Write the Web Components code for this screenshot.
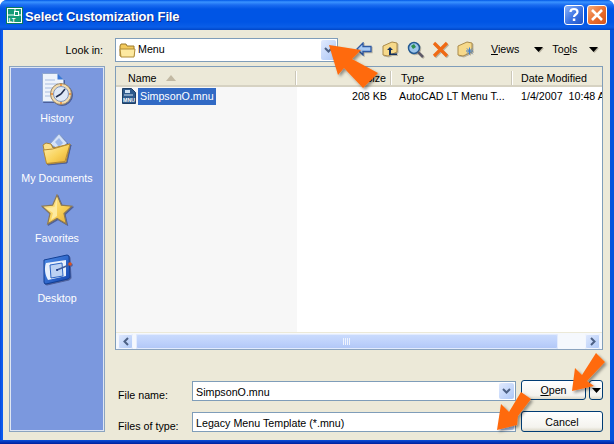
<!DOCTYPE html>
<html>
<head>
<meta charset="utf-8">
<title>Select Customization File</title>
<style>
html,body{margin:0;background:#fff;}
body{font:10.7px "Liberation Sans",Arial,sans-serif;color:#000;width:614px;height:444px;overflow:hidden;}
xp-place svg{filter:drop-shadow(1px 1px 0 rgba(40,50,100,.55));}
</style>
</head>
<body>
<svg width="0" height="0" style="position:absolute">
  <defs>
    <linearGradient id="gold" x1="0" y1="0" x2="1" y2="1"><stop offset="0" stop-color="#fff0b0"/><stop offset=".55" stop-color="#f9d25a"/><stop offset="1" stop-color="#e7a92e"/></linearGradient>
    <linearGradient id="blue" x1="0" y1="0" x2="1" y2="1"><stop offset="0" stop-color="#4f8ee8"/><stop offset="1" stop-color="#1244b0"/></linearGradient>
  </defs>
</svg>
<xp-dialog>
  <xp-titlebar slot="title">Select Customization File</xp-titlebar>
  <xp-places slot="places">
    <xp-place label="History">
      <svg width="32" height="34" viewBox="0 0 32 34"><path d="M1.500 1.500h15l6 6v22h-21z" fill="#eef3fb" stroke="#8ea6cf"/><path d="M16.500 1.500l6 6h-6z" fill="#3b79d8"/><path d="M4 8h10M4 12h13M4 16h8M4 20h7M4 24h7" stroke="#a9bde0"/><circle cx="20" cy="22" r="10.500" fill="#f3dcae" stroke="#96866c"/><circle cx="20" cy="22" r="7.500" fill="#dfe9f7" stroke="#8296bb"/><path d="M20 22l4-5M20 22l-5 3" stroke="#24304f" stroke-width="1.600" fill="none"/><circle cx="20" cy="13" r="1" fill="#e8842c"/><circle cx="20" cy="31" r="1" fill="#e8842c"/><circle cx="11" cy="22" r="1" fill="#e8842c"/><circle cx="29" cy="22" r="1" fill="#e8842c"/></svg>
    </xp-place>
    <xp-place label="My Documents">
      <svg width="30" height="32" viewBox="0 0 30 32"><path d="M8 11L17 1l8 9-6 8z" fill="#d6e3f8" stroke="#8ea6cf"/><path d="M13 9l4-4 4 5-4 4z" fill="#9db9ea"/><path d="M1 12l3-2 5 1 2 4 17-4-4 18-19 2z" fill="#fbe08a" stroke="#a9853a"/><path d="M1.500 17l9-1 17.500-5-5 17.500-18.500 2z" fill="url(#gold)" stroke="#b58a32"/></svg>
    </xp-place>
    <xp-place label="Favorites">
      <svg width="32" height="31" viewBox="0 0 32 31"><path d="M16 1l4.400 10.200 10.600 1-8 7.300 2.400 10.500L16 24.500 6.600 30 9 19.500l-8-7.300 10.600-1z" fill="url(#gold)" stroke="#8d7a55" stroke-width="1.200"/><path d="M16 4l-2.500 9L5 14l7 5-2 7 6-4z" fill="#fdeaa0"/></svg>
    </xp-place>
    <xp-place label="Desktop">
      <svg width="32" height="31" viewBox="0 0 32 31"><path d="M3 6l23-5q2 0 2 2l1 20q0 1-2 2L5 30q-2 0-2-2z" fill="url(#blue)" stroke="#123f94"/><path d="M5 9C3 14 4 21 7 26l18-4V6z" fill="#e8f0fc"/><path d="M9 11l12-2 1 13-12 2z" fill="#bcd2f3" stroke="#2b64c4"/><path d="M16 16l12-5" stroke="#3f5c9c" stroke-width="1.500"/><circle cx="29" cy="10" r="1.800" fill="#e0521c"/><circle cx="16" cy="16" r="1" fill="#14307a"/></svg>
    </xp-place>
  </xp-places>
  <xp-lookin slot="look"></xp-lookin>
  <xp-filelist slot="list"></xp-filelist>
  <xp-footer slot="footer"></xp-footer>
</xp-dialog>

<script>
class XpDialog extends HTMLElement{
  constructor(){
    super();
    this.attachShadow({mode:"open"}).innerHTML = `
<style>
:host{display:flex;flex-direction:column;width:614px;height:444px;position:relative;box-sizing:border-box;
  background:linear-gradient(90deg,#0647d8,#0a5cf0 2px,#0855dd);border-radius:7px 7px 0 0;overflow:hidden;}
.client{flex:1;margin:0 4px 4px 3px;background:#ece9d8;display:grid;grid-template-columns:96px 1fr;
  column-gap:10px;padding:8px 8px 8px 6px;}
.side{grid-row:1/3;margin-top:28px;display:flex;}
.main{display:flex;flex-direction:column;min-width:0;}
.bottomline{height:4px;background:linear-gradient(#0a4fd8,#001f9c);position:absolute;left:0;right:0;bottom:0;}
svg.arrows{position:absolute;left:0;top:0;}
</style>
<slot name="title"></slot>
<div class="client">
  <div class="side"><slot name="places"></slot></div>
  <div class="main">
    <slot name="look"></slot>
    <slot name="list"></slot>
    <slot name="footer"></slot>
  </div>
</div>
<div class="bottomline"></div>
<svg class="arrows" width="614" height="444">
  <defs><filter id="sh" x="-20%" y="-20%" width="150%" height="150%"><feDropShadow dx="2" dy="2" stdDeviation="1.500" flood-color="#000" flood-opacity=".4"/></filter></defs>
  <g fill="#ff6a0c" filter="url(#sh)">
    <polygon points="329,45 361,50 352,59 378,73 363,88 344,68 338,75"/>
    <polygon points="572,391 575,368 582,375 596,353 605,362 587,381 594,386"/>
    <polygon points="497,430 501,404 509,412 521,392 531,399 518,416 517,425"/>
  </g>
</svg>`;
  }
}
customElements.define("xp-dialog",XpDialog);

class XpTitlebar extends HTMLElement{
  constructor(){
    super();
    this.attachShadow({mode:"open"}).innerHTML = `
<style>
:host{display:flex;align-items:center;height:30px;flex:none;box-sizing:border-box;padding:0 7px 0 6px;
  background:linear-gradient(#0058e6 0,#3a93ff 2px,#1a6cf0 5px,#0055e5 9px,#0055e5 22px,#0a5ee8 27px,#0046c8 30px);
  color:#fff;font:bold 13px "Liberation Sans",Arial,sans-serif;letter-spacing:-.12px;text-shadow:1px 1px 0 #0a2a8c;}
.t{margin-left:2px;flex:1;padding-top:2px;}
.b{width:20px;height:20px;box-sizing:border-box;border:1px solid #fff;border-radius:3px;margin-left:3px;display:block;}
.help{background:linear-gradient(135deg,#8ab2f8,#3a72e2 55%,#1f55c8);}
.close{background:linear-gradient(135deg,#f7ab78,#e96c2c 55%,#d6541a);}
text{font:bold 6px "Liberation Sans",sans-serif;fill:#fff;letter-spacing:0;}
</style>
<svg width="17" height="17" viewBox="0 0 17 17"><rect x=".5" y=".5" width="16" height="16" fill="#fff" stroke="#0c7c5c"/><rect x="2" y="2" width="13" height="13" fill="#139b77"/><path d="M2 8h7M12 8h3M9 2v3" stroke="#fff" fill="none"/><rect x="8.500" y="4.500" width="4" height="4" fill="none" stroke="#fff"/><text x="2.500" y="14.500" style="text-shadow:none">LT</text></svg>
<span class="t"><slot></slot></span>
<svg class="b help" viewBox="0 0 18 18"><path d="M5.500 6c0-2 1.500-3 3.500-3s3.500 1 3.500 3c0 2.500-3.500 2.500-3.500 5" fill="none" stroke="#fff" stroke-width="2.200"/><rect x="7.800" y="12.500" width="2.500" height="2.500" fill="#fff"/></svg>
<svg class="b close" viewBox="0 0 18 18"><path d="M4 4l10 10M14 4L4 14" stroke="#fff" stroke-width="2.600"/></svg>`;
  }
}
customElements.define("xp-titlebar",XpTitlebar);

class XpPlaces extends HTMLElement{
  constructor(){
    super();
    this.attachShadow({mode:"open"}).innerHTML = `
<style>
:host{display:flex;flex-direction:column;width:96px;box-sizing:border-box;background:#7b98de;
  border:1px solid #8ba4bf;box-shadow:inset 0 0 0 1px #dfe6f3;padding-top:2px;}
</style>
<slot></slot>`;
  }
}
customElements.define("xp-places",XpPlaces);

class XpPlace extends HTMLElement{
  constructor(){
    super();
    this.attachShadow({mode:"open"}).innerHTML = `
<style>
:host{display:flex;flex-direction:column;align-items:center;justify-content:space-between;height:60px;
  box-sizing:border-box;padding:3px 0 5px;color:#fff;}
div{display:flex;height:34px;align-items:center;}
</style>
<div><slot></slot></div>
<span>${this.getAttribute("label")}</span>`;
  }
}
customElements.define("xp-place",XpPlace);

class XpCombo extends HTMLElement{
  constructor(){
    super();
    this.attachShadow({mode:"open"}).innerHTML = `
<style>
:host{display:flex;align-items:center;box-sizing:border-box;background:#fff;border:1px solid #7f9db9;padding:1px 1px 1px 3px;}
.v{flex:1;display:flex;align-items:center;gap:2px;white-space:nowrap;overflow:hidden;padding-top:var(--text-top,0);}
.d{width:15px;align-self:stretch;border-radius:2px;background:linear-gradient(135deg,#e1eafe,#aec8f7);display:flex;align-items:center;justify-content:center;}
</style>
<span class="v"><slot></slot></span>
<span class="d"><svg width="9" height="6" viewBox="0 0 9 6"><path d="M1 1l3.500 3.500L8 1" fill="none" stroke="#4d6185" stroke-width="2"/></svg></span>`;
  }
}
customElements.define("xp-combo",XpCombo);

class XpLookin extends HTMLElement{
  constructor(){
    super();
    this.attachShadow({mode:"open"}).innerHTML = `
<style>
:host{display:flex;height:28px;box-sizing:border-box;align-items:flex-start;}
.lbl{position:absolute;width:90px;margin-left:-102px;text-align:right;line-height:24px;}
xp-combo{width:223px;height:24px;flex:none;}
.tools{display:flex;align-items:center;height:18px;margin:2px 0 0 18px;}
.tools svg{display:block;flex:none;filter:drop-shadow(1px 1px 0 rgba(90,80,60,.35));}
.m{white-space:nowrap;}
.m u{text-decoration:underline;}
</style>
<span class="lbl">Look in:</span>
<xp-combo>
  <svg width="17" height="15" viewBox="0 0 17 15"><path d="M1 3l1-2h5l1 2h7v10H1z" fill="#f2c95c" stroke="#9c7a2c"/><path d="M1 6h15l-1 8H2z" fill="#fde9a0" stroke="#b08c38"/></svg>
  <span style="margin-top:-2px">Menu</span>
</xp-combo>
<div class="tools">
  <svg width="16" height="14" viewBox="0 0 16 14"><path d="M7 1L1 7l6 6V9.500h8v-5H7z" fill="#a9cbf5" stroke="#2f5aa4" stroke-width="1.300"/></svg>
  <svg width="16" height="16" viewBox="0 0 16 16" style="margin-left:10px"><path d="M1 5l9-4 5 1v9l-9 4-5-1z" fill="#f6d98a" stroke="#a98a4a"/><path d="M8 6L5 9h2v5h8v-1.500H9V9h2z" fill="#12305e"/></svg>
  <svg width="17" height="17" viewBox="0 0 17 17" style="margin-left:9px"><circle cx="7" cy="7" r="5.500" fill="#9cc5ea" stroke="#235a92" stroke-width="1.500"/><path d="M4 5l3-2 2 3-3 2z" fill="#2d8f4e"/><path d="M11 11l5 5" stroke="#5e5a68" stroke-width="2.500"/></svg>
  <svg width="17" height="17" viewBox="0 0 17 17" style="margin-left:8px"><path d="M2 2l13 13M15 2L2 15" stroke="#f06a14" stroke-width="3.200"/></svg>
  <svg width="17" height="16" viewBox="0 0 17 16" style="margin-left:8px"><path d="M1 5l9-4 5 1v9l-9 4-5-1z" fill="#f6d98a" stroke="#a98a4a"/><path d="M9 10h7M12.500 6.500v7M10 7.500l5 5M15 7.500l-5 5" stroke="#3f7fd0"/></svg>
  <span class="m" style="margin-left:17px"><u>V</u>iews</span>
  <svg width="9" height="5" viewBox="0 0 9 5" style="margin-left:15px"><path d="M0 0h9L4.500 5z"/></svg>
  <span class="m" style="margin-left:9px">To<u>o</u>ls</span>
  <svg width="9" height="5" viewBox="0 0 9 5" style="margin-left:12px"><path d="M0 0h9L4.500 5z"/></svg>
</div>`;
  }
}
customElements.define("xp-lookin",XpLookin);

class XpFilelist extends HTMLElement{
  constructor(){
    super();
    this.attachShadow({mode:"open"}).innerHTML = `
<style>
:host{display:flex;flex-direction:column;height:284px;width:488px;box-sizing:border-box;background:#fff;border:1px solid #7f9db9;border-bottom-color:#8ba4bf;}
.cols{display:grid;grid-template-columns:181px 95px 121px 1fr;flex:1;min-height:0;}
.head{height:20px;box-sizing:border-box;padding-top:3px;background:#ece9d8;border-bottom:2px solid #d6d2c2;display:flex;align-items:center;white-space:nowrap;margin-bottom:1px;}
.head i{display:block;width:1px;height:14px;background:#fff;box-shadow:-1px 0 0 #cbc7b8;margin-left:auto;}
.col{display:flex;flex-direction:column;min-width:0;overflow:hidden;}
.col.name{background:#f7f7f7;}
.cell{height:17px;line-height:17px;white-space:nowrap;}
.tri{margin-left:9px;}
.sel{background:#316ac5;color:#fff;padding:0 2px;height:17px;line-height:17px;}
.row{display:flex;gap:2px;padding-left:6px;height:17px;}
.r{text-align:right;padding-right:5px;}
.bar{height:17px;flex:none;display:flex;align-items:center;padding:0 2px;gap:2px;background:#f5f8fd;border-top:1px solid #ece9d8;box-sizing:border-box;}
.btn{width:15px;height:15px;border-radius:2px;background:linear-gradient(135deg,#e1eafe,#aec8f7);display:flex;align-items:center;justify-content:center;flex:none;box-shadow:inset 0 0 0 1px #f2f6fe;}
.thumb{width:422px;height:15px;border-radius:2px;background:linear-gradient(#cbdcfd,#bcd0fb 60%,#b0c6f6);box-shadow:inset 0 0 0 1px #e2ebfe;display:flex;align-items:center;justify-content:center;flex:none;margin-left:1px;}
.sp{flex:1;}
text{font:bold 5px "Liberation Sans",sans-serif;fill:#fff;}
</style>
<div class="cols">
  <div class="col name">
    <div class="head" style="padding-left:12px">Name
      <svg class="tri" width="10" height="6" viewBox="0 0 10 6"><path d="M5 0l5 6H0z" fill="#c2b9a3"/></svg><i></i></div>
    <div class="row">
      <svg width="14" height="16" viewBox="0 0 14 16"><path d="M.5.500h9l4 4v11H.5z" fill="#2e5a8c" stroke="#1d3d63"/><rect x="3" y="2" width="5" height="3" fill="#cfe0f2"/><path d="M2 7h9" stroke="#cfe0f2"/><text x="1" y="14" textLength="12" lengthAdjust="spacingAndGlyphs">MNU</text></svg>
      <span class="sel">SimpsonO.mnu</span>
    </div>
  </div>
  <div class="col">
    <div class="head"><span style="margin-left:auto">Size</span><span style="width:5px"></span><i style="margin-left:0"></i></div>
    <div class="cell r">208 KB</div>
  </div>
  <div class="col">
    <div class="head" style="padding-left:9px">Type<i></i></div>
    <div class="cell" style="padding-left:7px">AutoCAD LT Menu T...</div>
  </div>
  <div class="col">
    <div class="head" style="padding-left:8px">Date Modified</div>
    <div class="cell" style="padding-left:8px">1/4/2007 &nbsp;10:48 A</div>
  </div>
</div>
<div class="bar">
  <span class="btn"><svg width="6" height="9" viewBox="0 0 6 9"><path d="M5 1L1.500 4.500 5 8" fill="none" stroke="#4d6185" stroke-width="2"/></svg></span>
  <span class="thumb"><svg width="8" height="7" viewBox="0 0 8 7"><path d="M.5 0v7M2.500 0v7M4.500 0v7M6.500 0v7" stroke="#eef3fe"/></svg></span>
  <span class="sp"></span>
  <span class="btn"><svg width="6" height="9" viewBox="0 0 6 9"><path d="M1 1l3.500 3.500L1 8" fill="none" stroke="#4d6185" stroke-width="2"/></svg></span>
</div>`;
  }
}
customElements.define("xp-filelist",XpFilelist);

class XpButton extends HTMLElement{
  constructor(){
    super();
    this.attachShadow({mode:"open"}).innerHTML = `
<style>
:host{display:flex;align-items:center;justify-content:center;box-sizing:border-box;border:1px solid #003c74;border-radius:3px;
  background:linear-gradient(#fff,#f4f3ee 80%,#dcd8c8);}
</style>
<slot></slot>`;
  }
}
customElements.define("xp-button",XpButton);

class XpFooter extends HTMLElement{
  constructor(){
    super();
    this.attachShadow({mode:"open"}).innerHTML = `
<style>
:host{display:grid;grid-template-columns:77px 324px 65px 14px;grid-auto-rows:21px;column-gap:0;row-gap:10px;margin-top:30px;align-items:stretch;}
.l{align-self:end;padding-left:3px;line-height:15px;margin-bottom:-2px;}
xp-combo{margin-top:1px;--text-top:2px;}
.open{width:65px;margin-left:5px;height:20px;}
.dd{width:14px;height:20px;margin-left:8px;}
.cancel{grid-column:3/5;width:82px;margin-left:5px;}
u{text-decoration:underline;}
</style>
<span class="l">File name:</span>
<xp-combo>SimpsonO.mnu</xp-combo>
<xp-button class="open"><span><u>O</u>pen</span></xp-button>
<xp-button class="dd"><svg width="9" height="5" viewBox="0 0 9 5"><path d="M0 0h9L4.500 5z"/></svg></xp-button>
<span class="l">Files of type:</span>
<xp-combo>Legacy Menu Template (*.mnu)</xp-combo>
<xp-button class="cancel">Cancel</xp-button>`;
  }
}
customElements.define("xp-footer",XpFooter);
</script>
</body>
</html>
